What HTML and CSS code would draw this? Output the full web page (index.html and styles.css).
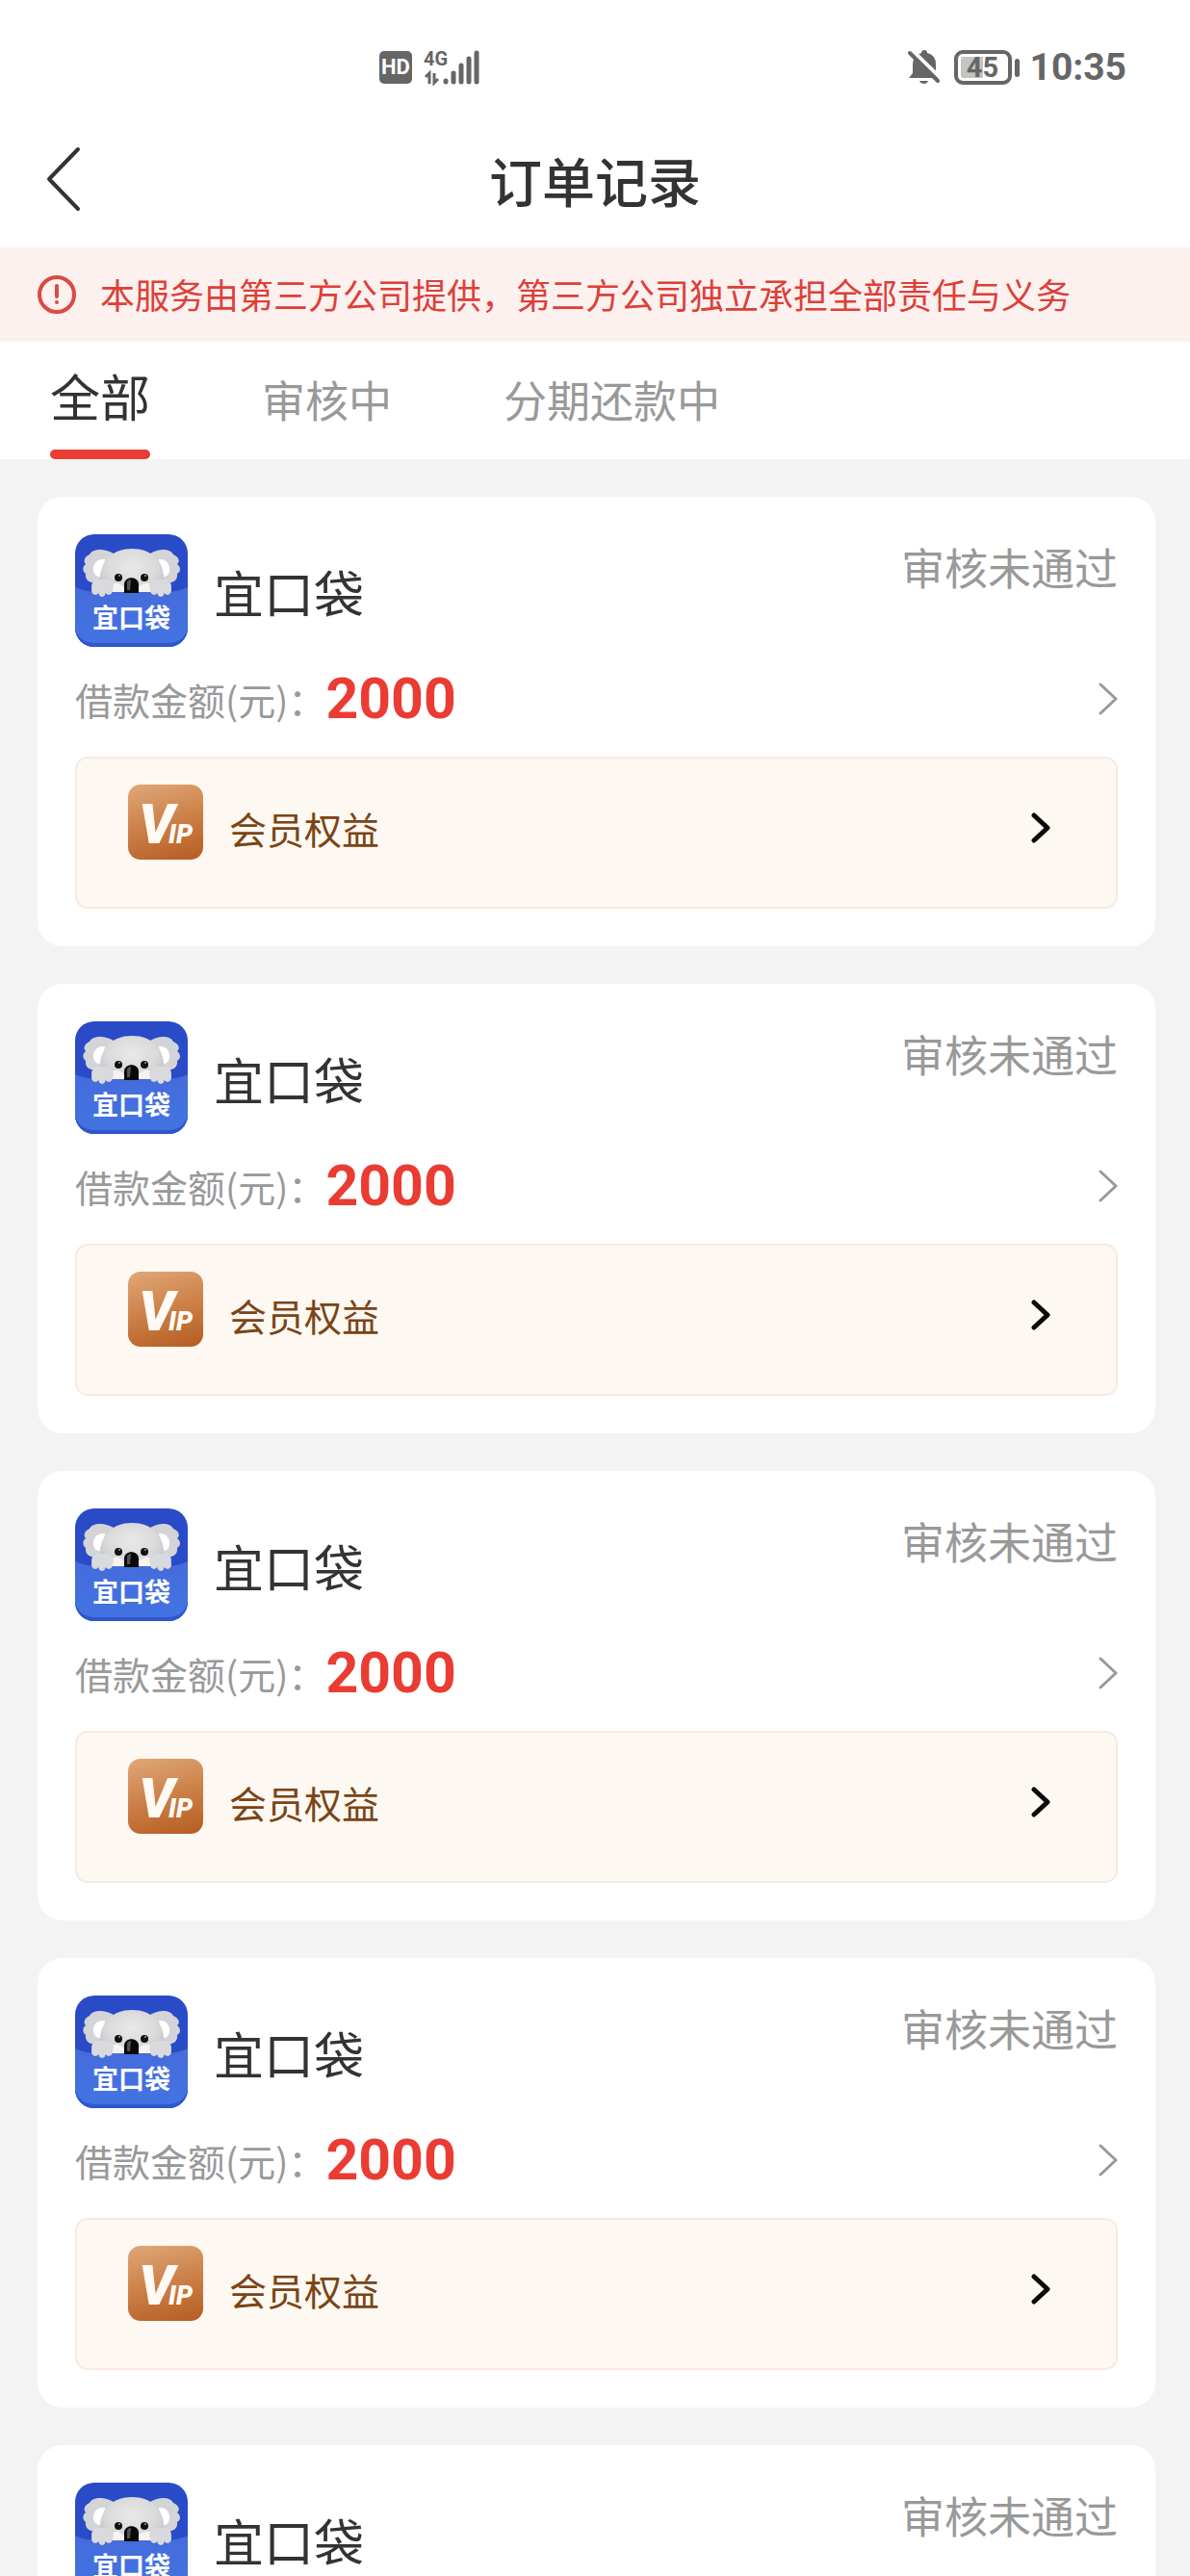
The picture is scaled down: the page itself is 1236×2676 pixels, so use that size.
FILE: index.html
```html
<!DOCTYPE html>
<html lang="zh-CN">
<head>
<meta charset="utf-8">
<meta name="viewport" content="width=device-width, initial-scale=1">
<title>订单记录</title>
<link rel="stylesheet" href="styles.css">
</head>
<body>
<svg class="defs" aria-hidden="true">
  <defs>
    <radialGradient id="fur" cx="50%" cy="40%" r="65%">
      <stop offset="0" stop-color="#e9e9e9"/><stop offset="0.6" stop-color="#dadada"/><stop offset="1" stop-color="#bfc0c5"/>
    </radialGradient>
    <linearGradient id="pocket" x1="0" y1="0" x2="0" y2="1">
      <stop offset="0" stop-color="#456bdc"/><stop offset="1" stop-color="#4274e2"/>
    </linearGradient>
    <symbol id="koala" viewBox="0 0 117 117">
      <rect width="117" height="117" fill="#2a4bc8"/>
      <g fill="#d3d4d8">
        <path d="M40 20C30 14 18 15 15 21C10 23 8 28 11 31C7 34 8 39 11 41C10 46 14 51 20 50L40 54Z"/>
        <path d="M78 20C88 14 99 15 102 21C107 23 110 28 106 31C110 34 110 39 106 41C107 46 103 51 97 50L77 54Z"/>
      </g>
      <path d="M31 26C22 25 18 32 19 38C20 43 24 45 28 44Z" fill="#fff"/>
      <path d="M87 26C95 25 99 32 98 38C97 43 94 45 90 44Z" fill="#fff"/>
      <path d="M59 15C80 15 91 28 92 43C93 52 90 58 86 62H31C27 58 24 52 26 43C28 27 39 15 59 15Z" fill="url(#fur)"/>
      <path d="M39 52C43 49 49 52 51 56V62H39Z M79 52C75 49 68 52 65 56V62H79Z" fill="#f6f3f1"/>
      <circle cx="45" cy="45" r="4" fill="#111"/><circle cx="72" cy="45" r="4" fill="#111"/>
      <circle cx="46" cy="43" r="1" fill="#999"/><circle cx="73" cy="43" r="1" fill="#999"/>
      <path d="M0 55Q10 60 24 60L93 60Q107 60 117 55V117H0Z" fill="url(#pocket)"/>
      <path d="M51 61V52C51 43 66 43 66 52V61Z" fill="#080808"/>
      <path d="M54 58V50Q55 47 58 47L57 58Z" fill="#555"/>
      <g fill="#d9dade">
        <rect x="17" y="47" width="23" height="14" rx="7"/><ellipse cx="21" cy="58" rx="4" ry="5"/><ellipse cx="28" cy="59" rx="4" ry="6"/><ellipse cx="35" cy="58" rx="4" ry="5"/>
        <rect x="77" y="47" width="23" height="14" rx="7"/><ellipse cx="82" cy="58" rx="4" ry="5"/><ellipse cx="89" cy="59" rx="4" ry="6"/><ellipse cx="96" cy="58" rx="4" ry="5"/>
      </g>
      <path d="M0 98Q4 112 20 113H97Q113 112 117 98V117H0Z" fill="#2f57cb"/>
    </symbol>
    <symbol id="go" viewBox="0 0 20 34"><path d="M2 2L18 17L2 32" fill="none" stroke="currentColor" stroke-width="3" stroke-linecap="round" stroke-linejoin="round"/></symbol>
    <symbol id="go-bold" viewBox="0 0 20 32"><path d="M3 3L17 16L3 29" fill="none" stroke="currentColor" stroke-width="5" stroke-linecap="round" stroke-linejoin="round"/></symbol>
  </defs>
</svg>
<div class="app">
  <div class="status-bar">
    <div class="status-group">
      <span class="hd">HD</span>
      <span class="network">
        <span class="network-type">4G</span>
        <svg class="signal" width="58" height="38" viewBox="0 0 58 38" aria-hidden="true" fill="none" stroke="#666" stroke-width="5" stroke-linecap="round">
          <path d="M23 33V34M31 25V34M39 17V34M47 10V34M55 4V34"/>
          <path d="M2 29L6 25V36M11 25V35L15 31" stroke-width="3" stroke-linecap="butt"/>
        </svg>
      </span>
    </div>
    <div class="status-group status-right">
      <svg width="34" height="38" viewBox="0 0 34 38" aria-hidden="true">
        <path d="M14 4Q14 1 17 1Q20 1 20 4Q29 6 29 16V24L33 30H1L5 25V16Q5 7 14 4Z" fill="#666"/>
        <path d="M12 33H21Q20 36 17 36Q13 36 12 33Z" fill="#666"/>
        <path d="M4 1L35 31" stroke="#fff" stroke-width="4"/>
        <path d="M2 4L31 33" stroke="#666" stroke-width="4" stroke-linecap="round"/>
      </svg>
      <span class="battery">45</span>
      <span class="battery-tip"></span>
      <time class="clock">10:35</time>
    </div>
  </div>

  <header class="header">
    <button class="back" type="button" aria-label="返回">
      <svg width="36" height="68" viewBox="0 0 36 68" aria-hidden="true"><path d="M33 3L3 34L33 65" fill="none" stroke="#333" stroke-width="4" stroke-linecap="round" stroke-linejoin="round"/></svg>
    </button>
    <h1 class="title">订单记录</h1>
  </header>

  <p class="notice">
    <svg width="40" height="40" viewBox="0 0 40 40" aria-hidden="true"><circle cx="20" cy="20" r="18" fill="none" stroke="#dc4a43" stroke-width="4"/><path d="M20 11V22" stroke="#dc4a43" stroke-width="4" stroke-linecap="round"/><circle cx="20" cy="28" r="2" fill="#dc4a43"/></svg>
    <span>本服务由第三方公司提供，第三方公司独立承担全部责任与义务</span>
  </p>

  <nav class="tabs">
    <a class="tab tab-active" href="#all" aria-current="page">全部</a>
    <a class="tab" href="#reviewing">审核中</a>
    <a class="tab" href="#repaying">分期还款中</a>
  </nav>

  <main class="orders">
    <article class="card">
      <div class="card-head">
        <div class="logo"><svg class="logo-art" aria-hidden="true"><use href="#koala"/></svg><span class="logo-text">宜口袋</span></div>
        <h2 class="name">宜口袋</h2>
        <span class="state">审核未通过</span>
      </div>
      <a class="amount-row" href="#order">
        <span class="amount-label">借款金额(元)：</span><strong class="amount">2000</strong>
        <svg class="go" aria-hidden="true"><use href="#go"/></svg>
      </a>
      <a class="member" href="#member">
        <span class="vip">VIP</span>
        <span class="member-label">会员权益</span>
        <svg class="go-bold" aria-hidden="true"><use href="#go-bold"/></svg>
      </a>
    </article>
    <article class="card">
      <div class="card-head">
        <div class="logo"><svg class="logo-art" aria-hidden="true"><use href="#koala"/></svg><span class="logo-text">宜口袋</span></div>
        <h2 class="name">宜口袋</h2>
        <span class="state">审核未通过</span>
      </div>
      <a class="amount-row" href="#order">
        <span class="amount-label">借款金额(元)：</span><strong class="amount">2000</strong>
        <svg class="go" aria-hidden="true"><use href="#go"/></svg>
      </a>
      <a class="member" href="#member">
        <span class="vip">VIP</span>
        <span class="member-label">会员权益</span>
        <svg class="go-bold" aria-hidden="true"><use href="#go-bold"/></svg>
      </a>
    </article>
    <article class="card">
      <div class="card-head">
        <div class="logo"><svg class="logo-art" aria-hidden="true"><use href="#koala"/></svg><span class="logo-text">宜口袋</span></div>
        <h2 class="name">宜口袋</h2>
        <span class="state">审核未通过</span>
      </div>
      <a class="amount-row" href="#order">
        <span class="amount-label">借款金额(元)：</span><strong class="amount">2000</strong>
        <svg class="go" aria-hidden="true"><use href="#go"/></svg>
      </a>
      <a class="member" href="#member">
        <span class="vip">VIP</span>
        <span class="member-label">会员权益</span>
        <svg class="go-bold" aria-hidden="true"><use href="#go-bold"/></svg>
      </a>
    </article>
    <article class="card">
      <div class="card-head">
        <div class="logo"><svg class="logo-art" aria-hidden="true"><use href="#koala"/></svg><span class="logo-text">宜口袋</span></div>
        <h2 class="name">宜口袋</h2>
        <span class="state">审核未通过</span>
      </div>
      <a class="amount-row" href="#order">
        <span class="amount-label">借款金额(元)：</span><strong class="amount">2000</strong>
        <svg class="go" aria-hidden="true"><use href="#go"/></svg>
      </a>
      <a class="member" href="#member">
        <span class="vip">VIP</span>
        <span class="member-label">会员权益</span>
        <svg class="go-bold" aria-hidden="true"><use href="#go-bold"/></svg>
      </a>
    </article>
    <article class="card">
      <div class="card-head">
        <div class="logo"><svg class="logo-art" aria-hidden="true"><use href="#koala"/></svg><span class="logo-text">宜口袋</span></div>
        <h2 class="name">宜口袋</h2>
        <span class="state">审核未通过</span>
      </div>
    </article>
  </main>
</div>
</body>
</html>
```
FILE: styles.css
```css
* {
  box-sizing: border-box;
}

body {
  margin: 0;
  background: #f3f3f3;
  color: #333;
  font-family: "Noto Sans CJK SC", "Noto Sans", sans-serif;
}

a {
  color: inherit;
  text-decoration: none;
}

svg {
  display: block;
  flex: none;
}

.defs {
  position: absolute;
  width: 0;
  height: 0;
}

/* The order list scrolls under the fixed top bars. */
.app {
  display: flex;
  flex-direction: column;
  height: 100vh;
  overflow: hidden;
}

.status-bar {
  flex: none;
  display: flex;
  justify-content: space-between;
  align-items: center;
  height: 140px;
  padding: 0 66px 0 394px;
  background: #fff;
  color: #666;
  font-family: Roboto, sans-serif;
}

.status-group {
  display: flex;
  align-items: center;
  gap: 12px;
}

.status-right {
  gap: 14px;
}

.hd {
  width: 34px;
  border-radius: 5px;
  background: #666;
  color: #fff;
  font-size: 22px;
  font-weight: 700;
  line-height: 34px;
  text-align: center;
}

.network {
  position: relative;
}

.network-type {
  position: absolute;
  top: 0;
  left: 0;
  font-size: 20px;
  font-weight: 700;
  line-height: 20px;
}

.battery {
  width: 60px;
  border: 4px solid #666;
  border-radius: 9px;
  background: linear-gradient(90deg, #c4c4c4 50%, #fff 50%) content-box;
  padding: 3px;
  font-size: 29px;
  font-weight: 700;
  line-height: 22px;
  text-align: center;
}

.battery-tip {
  width: 5px;
  height: 19px;
  margin-left: -11px;
  border-radius: 3px;
  background: #666;
}

.clock {
  margin-left: -3px;
  font-size: 39px;
  font-weight: 700;
  line-height: 40px;
}

.header {
  flex: none;
  display: grid;
  grid-template-columns: 130px 1fr 130px;
  align-items: center;
  height: 117px;
  padding-bottom: 26px;
  background: #fff;
}

.back {
  justify-self: start;
  padding: 0 0 0 48px;
  border: 0;
  background: none;
}

.title {
  margin: 0;
  font-size: 55px;
  font-weight: 500;
  line-height: 90px;
  text-align: center;
}

.notice {
  flex: none;
  display: flex;
  align-items: center;
  gap: 25px;
  height: 98px;
  margin: 0;
  padding: 0 39px;
  background: #fdf1f0;
  color: #dc4038;
  font-size: 36px;
  line-height: 96px;
}

.notice span {
  align-self: flex-start;
}

.tabs {
  flex: none;
  display: flex;
  gap: 116px;
  height: 122px;
  padding: 0 52px;
  background: #fff;
}

.tab {
  display: flex;
  flex-direction: column;
  justify-content: space-between;
  color: #999;
  font-size: 45px;
  line-height: 120px;
}

.tab-active {
  color: #333;
  font-size: 52px;
  line-height: 112px;
}

.tab-active::after {
  content: "";
  height: 10px;
  border-radius: 5px;
  background: #ea3c33;
}

.orders {
  flex: 1;
  display: flex;
  flex-direction: column;
  gap: 39px;
  min-height: 0;
  padding: 39px 36px 39px 39px;
  overflow-y: auto;
  scrollbar-width: none;
}

.card {
  flex: none;
  padding: 39px;
  border-radius: 26px;
  background: #fff;
}

.card-head {
  display: flex;
  gap: 27px;
}

.logo {
  position: relative;
  flex: none;
  width: 117px;
  height: 117px;
  overflow: hidden;
  border-radius: 20px;
}

.logo-art {
  width: 100%;
  height: 100%;
}

.logo-text {
  position: absolute;
  left: 0;
  bottom: 11px;
  width: 100%;
  color: #fff;
  font-size: 27px;
  font-weight: 700;
  line-height: 40px;
  text-align: center;
}

.name {
  margin: 0;
  font-size: 52px;
  font-weight: 400;
  line-height: 120px;
  height: 117px;
}

.state {
  margin-left: auto;
  color: #999;
  font-size: 45px;
  line-height: 68px;
}

.amount-row {
  display: flex;
  align-items: center;
  height: 114px;
  padding-bottom: 6px;
}

.amount-label {
  color: #999;
  font-size: 39px;
  line-height: 60px;
}

.amount {
  color: #ea3c33;
  font-family: Roboto, sans-serif;
  font-size: 59px;
  font-weight: 700;
  line-height: 60px;
}

.go {
  width: 20px;
  height: 34px;
  margin-left: auto;
  color: #999;
}

.member {
  display: flex;
  align-items: flex-start;
  gap: 27px;
  height: 158px;
  padding: 27px 68px 0 53px;
  border: 2px solid #f9e9e1;
  border-radius: 13px;
  background: #fdf8f1;
}

.vip {
  display: block;
  width: 78px;
  height: 78px;
  border-radius: 13px;
  background: linear-gradient(165deg, #e0a878, #cc8048 50%, #b55c22);
  color: #fffaf4;
  font-family: Roboto, sans-serif;
  font-size: 27px;
  font-style: italic;
  font-weight: 900;
  line-height: 27px;
  text-align: center;
}

.vip::first-letter {
  margin-right: -6px;
  font-size: 58px;
  line-height: 82px;
}

.member-label {
  color: #7a4516;
  font-size: 39px;
  line-height: 90px;
}

.go-bold {
  width: 20px;
  height: 90px;
  margin-left: auto;
  color: #0a0a0a;
}
```
